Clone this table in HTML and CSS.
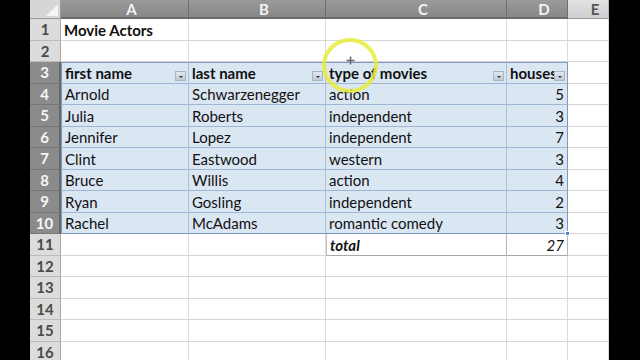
FILE: index.html
```html
<!DOCTYPE html>
<html>
<head>
<meta charset="utf-8">
<link rel="stylesheet" href="styles.css">
</head>
<body>
<div class="screen">
  <div class="sheet">
    <div class="corner"></div>
    <div class="ch sel">A</div>
    <div class="ch sel">B</div>
    <div class="ch sel">C</div>
    <div class="ch sel">D</div>
    <div class="ch">E</div>

    <div class="rh">1</div>
    <div class="c bold">Movie Actors</div><div class="c"></div><div class="c"></div><div class="c"></div><div class="c"></div>

    <div class="rh">2</div>
    <div class="c"></div><div class="c"></div><div class="c"></div><div class="c"></div><div class="c"></div>

    <div class="rh sel">3</div>
    <div class="c t th first">first name<span class="filter"></span></div>
    <div class="c t th">last name<span class="filter"></span></div>
    <div class="c t th">type of movies<span class="filter"></span></div>
    <div class="c t th last">houses<span class="filter"></span></div>
    <div class="c"></div>

    <div class="rh sel">4</div>
    <div class="c t first">Arnold</div><div class="c t">Schwarzenegger</div><div class="c t">action</div><div class="c t num last">5</div><div class="c"></div>

    <div class="rh sel">5</div>
    <div class="c t first">Julia</div><div class="c t">Roberts</div><div class="c t">independent</div><div class="c t num last">3</div><div class="c"></div>

    <div class="rh sel">6</div>
    <div class="c t first">Jennifer</div><div class="c t">Lopez</div><div class="c t">independent</div><div class="c t num last">7</div><div class="c"></div>

    <div class="rh sel">7</div>
    <div class="c t first">Clint</div><div class="c t">Eastwood</div><div class="c t">western</div><div class="c t num last">3</div><div class="c"></div>

    <div class="rh sel">8</div>
    <div class="c t first">Bruce</div><div class="c t">Willis</div><div class="c t">action</div><div class="c t num last">4</div><div class="c"></div>

    <div class="rh sel">9</div>
    <div class="c t first">Ryan</div><div class="c t">Gosling</div><div class="c t">independent</div><div class="c t num last">2</div><div class="c"></div>

    <div class="rh sel">10</div>
    <div class="c t first bottom">Rachel</div><div class="c t bottom">McAdams</div><div class="c t bottom">romantic comedy</div><div class="c t num last bottom">3<span class="handle"></span></div><div class="c"></div>

    <div class="rh">11</div>
    <div class="c"></div><div class="c"></div><div class="c tot totl">total</div><div class="c tot num totr">27</div><div class="c"></div>

    <div class="rh">12</div>
    <div class="c"></div><div class="c"></div><div class="c"></div><div class="c"></div><div class="c"></div>
    <div class="rh">13</div>
    <div class="c"></div><div class="c"></div><div class="c"></div><div class="c"></div><div class="c"></div>
    <div class="rh">14</div>
    <div class="c"></div><div class="c"></div><div class="c"></div><div class="c"></div><div class="c"></div>
    <div class="rh">15</div>
    <div class="c"></div><div class="c"></div><div class="c"></div><div class="c"></div><div class="c"></div>
    <div class="rh">16</div>
    <div class="c"></div><div class="c"></div><div class="c"></div><div class="c"></div><div class="c"></div>
  </div>
  <div class="cursor-ring">
    <svg class="cursor" width="9" height="9" viewBox="0 0 9 9"><path d="M4.5 0.5v8M0.5 4.5h8" stroke="#666" stroke-width="1.5" fill="none"/></svg>
  </div>
</div>
</body>
</html>
```

FILE: styles.css
```css
* { box-sizing: border-box; }
html, body { margin: 0; padding: 0; background: #000; }
body { width: 640px; height: 360px; overflow: hidden; }

.screen {
  position: relative;
  width: 640px;
  height: 360px;
  display: flex;
  padding-left: 30px;
  background: #000;
}

.sheet {
  display: grid;
  grid-template-columns: 31px 128px 137px 181px 61px 41px;
  grid-template-rows: 19px repeat(16, 21.5px);
  background: #fff;
  width: 579px;
  height: 360px;
  overflow: hidden;
  font-family: Lato, "Open Sans", sans-serif;
  font-size: 15px;
  color: #111;
}

.corner {
  background: #d6d6d6;
  border-right: 1px solid #9a9a9a;
  border-bottom: 1px solid #9a9a9a;
  position: relative;
}
.corner::after {
  content: "";
  position: absolute;
  right: 2px;
  bottom: 2px;
  width: 0; height: 0;
  border-left: 12px solid transparent;
  border-bottom: 12px solid #f4f4f4;
}

.ch {
  display: flex;
  align-items: center;
  justify-content: center;
  background: linear-gradient(#e2e2e2, #d0d0d0);
  color: #555;
  font-weight: 700;
  font-size: 15px;
  border-right: 1px solid #b8b8b8;
  border-bottom: 1px solid #9a9a9a;
  padding-left: 14px;
}
.ch.sel {
  background: linear-gradient(#9a9a9a, #878787);
  color: #f4f4f4;
  border-right: 1px solid #6e6e6e;
  border-bottom: 2px solid #6a6a6a;
}

.rh {
  display: flex;
  align-items: center;
  justify-content: center;
  background: #dcdcdc;
  color: #4a4a4a;
  font-weight: 700;
  font-size: 15px;
  border-right: 1px solid #a8a8a8;
  border-bottom: 1px solid #bcbcbc;
}
.rh.sel {
  background: #8b8b8b;
  color: #f6f6f6;
  border-right: 2px solid #6a6a6a;
  border-bottom: 1px solid #777;
}

.c {
  position: relative;
  display: flex;
  align-items: center;
  padding: 1px 3px 0 3px;
  border-right: 1px solid #dadada;
  border-bottom: 1px solid #d6d6d6;
  white-space: nowrap;
  overflow: visible;
}
.bold { font-weight: 700; }

.t {
  background: #dbe6f3;
  border-right: 1px solid #a9bfdc;
  border-bottom: 1px solid #9fb6d6;
}
.th {
  font-weight: 700;
  border-top: 1px solid #7f98bb;
}
.first { border-left: 1px solid #7f98bb; }
.last { border-right: 1px solid #7f98bb; }
.bottom { border-bottom: 1px solid #7a93b8; }
.num { justify-content: flex-end; }

.th.last { overflow: hidden; padding-right: 0; }

.filter {
  position: absolute;
  right: 2px;
  bottom: 2px;
  width: 11px;
  height: 10px;
  background: linear-gradient(#e4e9f0, #bfc8d4);
  border: 1px solid #a9b4c4;
}
.filter::after {
  content: "";
  position: absolute;
  left: 3px;
  top: 4px;
  border-left: 2px solid transparent;
  border-right: 2px solid transparent;
  border-top: 2px solid #333;
}

.handle {
  position: absolute;
  right: -3px;
  bottom: -3px;
  width: 5px;
  height: 5px;
  background: #5b82bf;
  border: 1px solid #fff;
  z-index: 2;
}

.tot {
  font-weight: 700;
  font-style: italic;
  border-right: 1px solid #b5b5b5;
  border-bottom: 1px solid #a8a8a8;
}
.tot.num { font-weight: 400; }
.totl { border-left: 1px solid #c4c4c4; }

.cursor-ring {
  position: absolute;
  left: 322px;
  top: 38px;
  width: 56px;
  height: 55px;
  border-radius: 50%;
  border: 4px solid rgba(232, 236, 60, 0.85);
  display: flex;
  align-items: center;
  justify-content: center;
}
.cursor {
  margin-top: -10px;
}
```
